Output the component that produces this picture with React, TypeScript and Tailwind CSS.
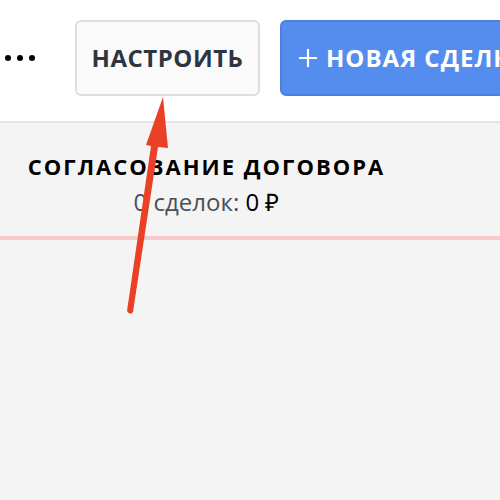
export default function App() {
  return (
    <div className="relative w-[500px] h-[500px] overflow-hidden bg-[#f4f4f4] font-['Open_Sans',sans-serif]">
      <header className="flex items-start h-[123px] bg-white border-b-2 border-[#e4e4e4] pl-[5px] pt-[20px] whitespace-nowrap">
        <div className="flex items-center gap-[6px] mr-[40px] h-[76px]">
          <span className="w-[6px] h-[6px] rounded-full bg-black" />
          <span className="w-[6px] h-[6px] rounded-full bg-black" />
          <span className="w-[6px] h-[6px] rounded-full bg-black" />
        </div>
        <button className="shrink-0 w-[185px] h-[76px] rounded-[6px] border-2 border-[#dedede] bg-[#fafafa] text-[#2e3542] text-[24px] font-bold tracking-[0.5px]">
          НАСТРОИТЬ
        </button>
        <button className="shrink-0 ml-[20px] w-[280px] h-[76px] rounded-[6px] border-2 border-[#4c80dd] bg-[#548ded] text-white text-[24px] font-bold tracking-[1px] flex items-center pl-[16px] gap-[8px]">
          <svg width="20" height="20" viewBox="0 0 20 20" className="shrink-0">
            <path d="M10 1v18M1 10h18" stroke="white" strokeWidth="2.2" />
          </svg>
          НОВАЯ СДЕЛКА
        </button>
      </header>
      <div className="w-[413px] flex flex-col items-center pt-[28px]">
        <div className="text-[22px] font-bold tracking-[2px] text-black leading-[30px]">СОГЛАСОВАНИЕ ДОГОВОРА</div>
        <div className="text-[24px] leading-[34px] mt-[4px]">
          <span className="text-[#4a4f59]">0 сделок: </span>
          <span className="text-black">0 ₽</span>
        </div>
      </div>
      <div className="mt-[17px] h-[4px] bg-[#f8cbcb]" />
      <svg className="absolute left-0 top-0 pointer-events-none" width="500" height="500" viewBox="0 0 500 500">
        <path d="M163 97 L168 148 L158 147 L133 312 Q130 316 127 311 L151 146 L146 145 Z" fill="#ea4126" />
      </svg>
    </div>
  )
}
